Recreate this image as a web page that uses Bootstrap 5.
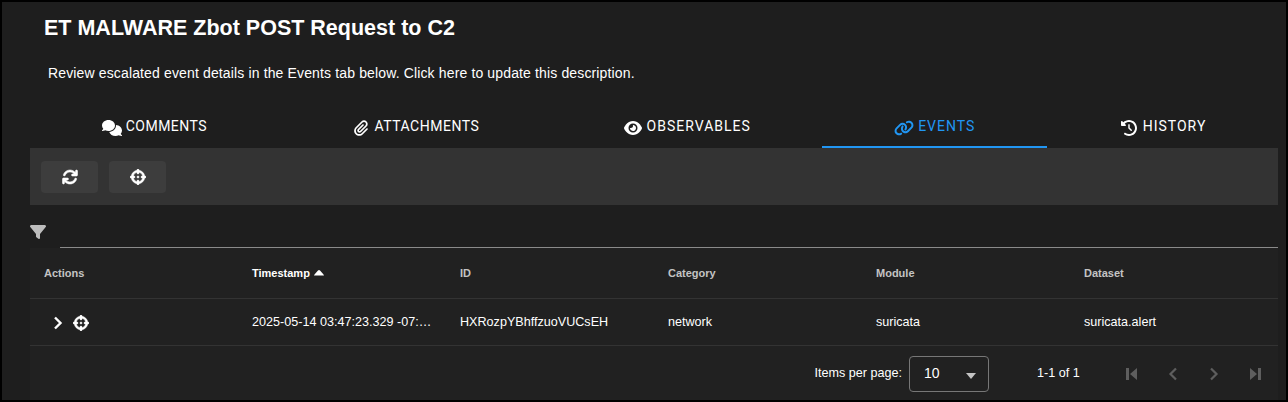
<!DOCTYPE html>
<html lang="en">
<head>
    <meta charset="UTF-8">
    <meta name="viewport" content="width=device-width, initial-scale=1.0">
    <title>Case - Events</title>
    <link href="https://cdn.jsdelivr.net/npm/bootstrap@5.3.0/dist/css/bootstrap.min.css" rel="stylesheet">
    <style>
        html, body { height: 402px; overflow: hidden; background: #000; }
        body { font-family: "Liberation Sans", Arial, sans-serif; color: #fff; }
        svg { fill: currentColor; display: block; flex: none; }
        .case-frame { height: 402px; border: 2px solid #000; background: #1e1e1e; padding: 0 8px 0 28px; overflow: hidden; }
        .case-title { font-size: 21.5px; font-weight: 700; line-height: 28px; margin: 12px 0 0 14px; }
        .case-desc { font-size: 14px; letter-spacing: .14px; line-height: 20px; margin: 21px 0 0 18px; }
        .case-tabs { margin-top: 18px; height: 47px; }
        .case-tabs .nav-link { display: flex; align-items: center; justify-content: center; gap: 4px; height: 47px; padding: 5px 16px 0; font-family: Roboto, sans-serif; font-size: 14px; letter-spacing: .7px; text-transform: uppercase; color: #fff; border-bottom: 2px solid transparent; border-radius: 0; }
        .case-tabs .nav-link svg { margin-top: 4px; }
        .case-tabs .nav-link.active { color: #2196f3; border-bottom-color: #2196f3; }
        .case-tabs .nav-link.case-tight { letter-spacing: .5px; }
        .case-tabs .nav-link.case-wide { letter-spacing: 1px; }
        .case-bar { height: 57px; background: #333; padding: 13px 11px; gap: 11px; }
        .case-btn { width: 57px; height: 32px; background: #3d3d3d; border: 0; border-radius: 4px; color: #fff; padding: 0; }
        .case-bold { stroke: currentColor; stroke-width: 18; }
        .case-filter { height: 43px; }
        .case-filter-line { height: 100%; margin-left: 30px; border-bottom: 1px solid #8a8a8a; }
        .case-filter svg { color: #bdbdbd; position: absolute; left: 0; top: 19px; }
        .case-panel { background: #212121; height: 154px; }
        .case-table { table-layout: fixed; width: 1248px; margin: 0; --bs-table-bg: transparent; --bs-table-color: #fff; }
        .case-table th, .case-table td { padding: 0 14px; vertical-align: middle; border-bottom: 1px solid #333; white-space: nowrap; overflow: hidden; }
        .case-table th { height: 50px; font-size: 11px; font-weight: 700; color: #c4c4c4; }
        .case-table th.sorted { color: #fff; }
        .case-table td { height: 47px; font-size: 12.6px; padding-top: 2px; }
        .case-actions { margin-left: 9px; gap: 10px; }
        .case-cut { text-overflow: ellipsis; }
        .case-pager { height: 56px; font-size: 12.6px; padding-right: 3px; }
        .case-select { width: 80px; height: 36px; border: 1px solid #777; border-radius: 4px; padding: 0 12px 0 14px; font-size: 14px; margin: 0 48px 0 7px; }
        .case-caret { width: 0; height: 0; border-left: 5px solid transparent; border-right: 5px solid transparent; border-top: 6px solid #c4c4c4; margin-top: 4px; }
        .case-range { width: 74px; }
        .case-page-btn { width: 41px; color: #5e5e5e; }
    </style>
</head>
<body>
<div class="case-frame">
    <h1 class="case-title">ET MALWARE Zbot POST Request to C2</h1>
    <p class="case-desc">Review escalated event details in the Events tab below. Click here to update this description.</p>

    <!-- tabs -->
    <ul class="nav nav-fill case-tabs">
        <li class="nav-item"><a class="nav-link case-tight" href="#">
            <svg width="20" height="16" viewBox="0 0 640 512"><path d="M208 352c114.9 0 208-78.8 208-176S322.9 0 208 0S0 78.8 0 176c0 38.6 14.7 74.3 39.6 103.4c-3.5 9.4-8.7 17.7-14.2 24.7c-4.8 6.2-9.7 11-13.3 14.3c-1.8 1.6-3.3 2.9-4.3 3.7c-.5 .4-.9 .7-1.1 .8l-.2 .2 0 0 0 0C1 327.2-1.4 334.4 .8 340.9S9.1 352 16 352c21.8 0 43.8-5.6 62.1-12.5c9.2-3.5 17.8-7.4 25.3-11.4C134.1 343.3 169.8 352 208 352zM448 176c0 112.3-99.1 196.9-216.5 207C255.8 457.4 336.4 512 432 512c38.2 0 73.9-8.7 104.7-23.9c7.5 4 16 7.9 25.2 11.4c18.3 6.9 40.3 12.5 62.1 12.5c6.9 0 13.1-4.5 15.2-11.1c2.1-6.6-.2-13.8-5.8-17.9l0 0 0 0-.2-.2c-.2-.2-.6-.4-1.1-.8c-1-.8-2.5-2-4.3-3.7c-3.6-3.3-8.5-8.1-13.3-14.3c-5.5-7-10.7-15.4-14.2-24.7c24.9-29 39.6-64.7 39.6-103.4c0-92.8-84.9-168.9-192.6-175.5c.4 5.1 .6 10.3 .6 15.5z"/></svg>Comments</a></li>
        <li class="nav-item"><a class="nav-link case-tight" href="#">
            <svg width="20" height="16" viewBox="0 0 448 512"><path d="M364.2 83.8c-24.4-24.4-64-24.4-88.4 0l-184 184c-42.1 42.1-42.1 110.3 0 152.4s110.3 42.1 152.4 0l152-152c10.9-10.9 28.7-10.9 39.6 0s10.9 28.7 0 39.6l-152 152c-64 64-167.6 64-231.6 0s-64-167.6 0-231.6l184-184c46.3-46.3 121.3-46.3 167.6 0s46.3 121.3 0 167.6l-176 176c-28.6 28.6-75 28.6-103.6 0s-28.6-75 0-103.6l144-144c10.9-10.9 28.7-10.9 39.6 0s10.9 28.7 0 39.6l-144 144c-6.7 6.7-6.7 17.7 0 24.4s17.7 6.7 24.4 0l176-176c24.4-24.4 24.4-64 0-88.4z"/></svg>Attachments</a></li>
        <li class="nav-item"><a class="nav-link case-wide" href="#">
            <svg width="20" height="16" viewBox="0 0 576 512"><path d="M288 32c-80.8 0-145.5 36.8-192.6 80.6C48.6 156 17.3 208 2.5 243.7c-3.3 7.9-3.3 16.7 0 24.6C17.3 304 48.6 356 95.4 399.4C142.5 443.2 207.2 480 288 480s145.5-36.8 192.6-80.6c46.8-43.5 78.1-95.4 93-131.1c3.3-7.9 3.3-16.7 0-24.6c-14.9-35.7-46.2-87.7-93-131.1C433.5 68.8 368.8 32 288 32zM144 256a144 144 0 1 1 288 0 144 144 0 1 1 -288 0zm144-64c0 35.3-28.7 64-64 64c-7.1 0-13.9-1.2-20.3-3.3c-5.5-1.8-11.9 1.6-11.7 7.4c.3 6.9 1.3 13.8 3.2 20.7c13.7 51.2 66.4 81.6 117.6 67.9s81.6-66.4 67.9-117.6c-11.1-41.5-47.8-69.4-88.6-71.1c-5.8-.2-9.2 6.1-7.4 11.7c2.1 6.4 3.3 13.2 3.3 20.3z"/></svg>Observables</a></li>
        <li class="nav-item"><a class="nav-link active case-wide" href="#">
            <svg width="20" height="16" viewBox="0 0 640 512"><path d="M579.8 267.7c56.5-56.5 56.5-148 0-204.5c-50-50-128.8-56.5-186.3-15.4l-1.6 1.1c-14.4 10.3-17.7 30.3-7.4 44.6s30.3 17.7 44.6 7.4l1.6-1.1c32.1-22.9 76-19.3 103.8 8.6c31.5 31.5 31.5 82.5 0 114L422.3 334.8c-31.5 31.5-82.5 31.5-114 0c-27.9-27.9-31.5-71.8-8.6-103.8l1.1-1.6c10.3-14.4 6.9-34.4-7.4-44.6s-34.4-6.9-44.6 7.4l-1.1 1.6C206.5 251.2 213 330 263 380c56.5 56.5 148 56.5 204.5 0L579.8 267.7zM60.2 244.3c-56.5 56.5-56.5 148 0 204.5c50 50 128.8 56.5 186.3 15.4l1.6-1.1c14.4-10.3 17.7-30.3 7.4-44.6s-30.3-17.7-44.6-7.4l-1.6 1.1c-32.1 22.9-76 19.3-103.8-8.6C74 372 74 321 105.5 289.5L217.7 177.2c31.5-31.5 82.5-31.5 114 0c27.9 27.9 31.5 71.8 8.6 103.9l-1.1 1.6c-10.3 14.4-6.9 34.4 7.4 44.6s34.4 6.9 44.6-7.4l1.1-1.6C433.5 260.8 427 182 377 132c-56.5-56.5-148-56.5-204.5 0L60.2 244.3z"/></svg>Events</a></li>
        <li class="nav-item"><a class="nav-link case-wide" href="#">
            <svg width="20" height="16" viewBox="0 0 512 512"><path d="M75 75L41 41C25.9 25.9 0 36.6 0 57.9V168c0 13.3 10.7 24 24 24H134.1c21.4 0 32.1-25.9 17-41l-30.8-30.8C155 85.5 203 64 256 64c106 0 192 86 192 192s-86 192-192 192c-40.8 0-78.6-12.7-109.7-34.4c-14.5-10.1-34.4-6.6-44.6 7.9s-6.6 34.4 7.9 44.6C151.2 495 201.7 512 256 512c141.4 0 256-114.6 256-256S397.4 0 256 0C185.3 0 121.3 28.7 75 75zm181 53c-13.3 0-24 10.7-24 24V256c0 6.4 2.5 12.5 7 17l72 72c9.4 9.4 24.6 9.4 33.9 0s9.4-24.6 0-33.9l-65-65V152c0-13.3-10.7-24-24-24z"/></svg>History</a></li>
    </ul>

    <!-- toolbar -->
    <div class="case-bar d-flex">
        <button class="case-btn d-flex align-items-center justify-content-center" type="button">
            <svg class="case-bold" width="16" height="16" viewBox="0 0 512 512"><path d="M105.1 202.6c7.7-21.8 20.2-42.3 37.8-59.8c62.5-62.5 163.8-62.5 226.3 0L386.3 160H336c-17.7 0-32 14.3-32 32s14.3 32 32 32H463.5c0 0 0 0 0 0h.4c17.7 0 32-14.3 32-32V64c0-17.7-14.3-32-32-32s-32 14.3-32 32v51.2L414.4 97.6c-87.5-87.5-229.3-87.5-316.8 0C73.2 122 55.6 150.7 44.8 181.4c-5.9 16.7 2.9 34.9 19.5 40.8s34.9-2.9 40.8-19.5zM39 289.3c-5 1.5-9.8 4.2-13.7 8.2c-4 4-6.7 8.8-8.1 14c-.3 1.2-.6 2.5-.8 3.8c-.3 1.7-.4 3.4-.4 5.1V448c0 17.7 14.3 32 32 32s32-14.3 32-32V396.9l17.6 17.5 0 0c87.5 87.4 229.3 87.4 316.7 0c24.4-24.4 42.1-53.1 52.9-83.7c5.9-16.7-2.9-34.9-19.5-40.8s-34.9 2.9-40.8 19.5c-7.7 21.8-20.2 42.3-37.8 59.8c-62.5 62.5-163.8 62.5-226.3 0l-.1-.1L125.6 352H176c17.7 0 32-14.3 32-32s-14.3-32-32-32H48.4c-1.6 0-3.2 .1-4.8 .3s-3.1 .5-4.6 1z"/></svg>
        </button>
        <button class="case-btn d-flex align-items-center justify-content-center" type="button">
            <svg class="case-bold" width="16" height="16" viewBox="0 0 512 512"><path d="M256 0c17.7 0 32 14.3 32 32V42.4c93.7 13.9 167.7 88 181.6 181.6H480c17.7 0 32 14.3 32 32s-14.3 32-32 32H469.6c-13.9 93.7-88 167.7-181.6 181.6V480c0 17.7-14.3 32-32 32s-32-14.3-32-32V469.6C130.3 455.7 56.3 381.7 42.4 288H32c-17.7 0-32-14.3-32-32s14.3-32 32-32H42.4C56.3 130.3 130.3 56.3 224 42.4V32c0-17.7 14.3-32 32-32zM107.4 288c12.5 58.3 58.4 104.1 116.6 116.6V384c0-17.7 14.3-32 32-32s32 14.3 32 32v20.6c58.3-12.5 104.1-58.4 116.6-116.6H384c-17.7 0-32-14.3-32-32s14.3-32 32-32h20.6C392.1 165.7 346.3 119.9 288 107.4V128c0 17.7-14.3 32-32 32s-32-14.3-32-32V107.4C165.7 119.9 119.9 165.7 107.4 224H128c17.7 0 32 14.3 32 32s-14.3 32-32 32H107.4zM256 224a32 32 0 1 1 0 64 32 32 0 1 1 0-64z"/></svg>
        </button>
    </div>

    <!-- filter -->
    <div class="case-filter position-relative">
        <svg width="16" height="16" viewBox="0 0 512 512"><path d="M3.9 54.9C10.5 40.9 24.5 32 40 32H472c15.5 0 29.5 8.9 36.1 22.9s4.6 30.5-5.2 42.5L320 320.9V448c0 12.1-6.8 23.2-17.7 28.6s-23.8 4.3-33.5-3l-64-48c-8.1-6-12.8-15.5-12.8-25.6V320.9L9 97.3C-.7 85.4-2.8 68.8 3.9 54.9z"/></svg>
        <div class="case-filter-line"></div>
    </div>

    <!-- events -->
    <div class="case-panel">
        <table class="table case-table">
            <thead>
                <tr>
                    <th>Actions</th>
                    <th class="sorted"><span class="d-inline-flex align-items-center gap-1">Timestamp
                        <svg width="10" height="6" viewBox="0 0 10 6"><path d="M0 5.6C0 5 .3 4.7.7 4.2L4 .6c.6-.7 1.4-.7 2 0l3.3 3.6c.4.5.7.8.7 1.4z"/></svg></span></th>
                    <th>ID</th>
                    <th>Category</th>
                    <th>Module</th>
                    <th>Dataset</th>
                </tr>
            </thead>
            <tbody>
                <tr>
                    <td>
                        <div class="d-flex align-items-center case-actions">
                            <svg width="10" height="14" viewBox="0 0 10 14"><path d="M2 1.5 7.5 7 2 12.5" fill="none" stroke="currentColor" stroke-width="2.4"/></svg>
                            <svg class="case-bold" width="16" height="16" viewBox="0 0 512 512"><path d="M256 0c17.7 0 32 14.3 32 32V42.4c93.7 13.9 167.7 88 181.6 181.6H480c17.7 0 32 14.3 32 32s-14.3 32-32 32H469.6c-13.9 93.7-88 167.7-181.6 181.6V480c0 17.7-14.3 32-32 32s-32-14.3-32-32V469.6C130.3 455.7 56.3 381.7 42.4 288H32c-17.7 0-32-14.3-32-32s14.3-32 32-32H42.4C56.3 130.3 130.3 56.3 224 42.4V32c0-17.7 14.3-32 32-32zM107.4 288c12.5 58.3 58.4 104.1 116.6 116.6V384c0-17.7 14.3-32 32-32s32 14.3 32 32v20.6c58.3-12.5 104.1-58.4 116.6-116.6H384c-17.7 0-32-14.3-32-32s14.3-32 32-32h20.6C392.1 165.7 346.3 119.9 288 107.4V128c0 17.7-14.3 32-32 32s-32-14.3-32-32V107.4C165.7 119.9 119.9 165.7 107.4 224H128c17.7 0 32 14.3 32 32s-14.3 32-32 32H107.4zM256 224a32 32 0 1 1 0 64 32 32 0 1 1 0-64z"/></svg>
                        </div>
                    </td>
                    <td class="case-cut">2025-05-14 03:47:23.329 -07:00</td>
                    <td>HXRozpYBhffzuoVUCsEH</td>
                    <td>network</td>
                    <td>suricata</td>
                    <td>suricata.alert</td>
                </tr>
            </tbody>
        </table>

        <div class="case-pager d-flex align-items-center justify-content-end">
            <span>Items per page:</span>
            <div class="case-select d-flex align-items-center justify-content-between"><span>10</span><span class="case-caret"></span></div>
            <span class="case-range">1-1 of 1</span>
            <div class="d-flex">
                <span class="case-page-btn d-flex justify-content-center"><svg width="12" height="14" viewBox="0 0 12 14"><path d="M0 1h3v12H0zM11 1v12L4 7z"/></svg></span>
                <span class="case-page-btn d-flex justify-content-center"><svg width="12" height="14" viewBox="0 0 12 14"><path d="M9 1.5 3.5 7 9 12.5" fill="none" stroke="currentColor" stroke-width="2.2"/></svg></span>
                <span class="case-page-btn d-flex justify-content-center"><svg width="12" height="14" viewBox="0 0 12 14"><path d="M3 1.5 8.5 7 3 12.5" fill="none" stroke="currentColor" stroke-width="2.2"/></svg></span>
                <span class="case-page-btn d-flex justify-content-center"><svg width="12" height="14" viewBox="0 0 12 14"><path d="M1 1v12l7-6zM9 1h3v12H9z"/></svg></span>
            </div>
        </div>
    </div>
</div>
<script src="https://cdn.jsdelivr.net/npm/bootstrap@5.3.0/dist/js/bootstrap.bundle.min.js"></script>
</body>
</html>
